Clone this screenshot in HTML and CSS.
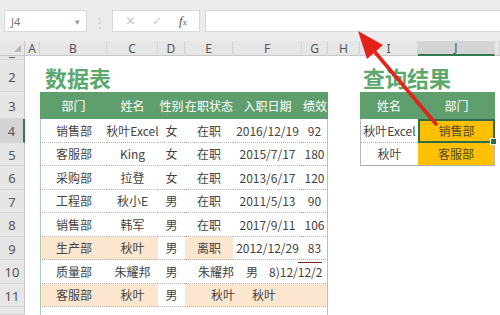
FILE: index.html
```html
<!DOCTYPE html>
<html lang="zh">
<head>
  <meta charset="UTF-8" />
  <title>数据表 - 查询结果</title>
  <link rel="stylesheet" href="styles.css">
</head>
<body>
  <div class="toolbar">
    <div class="namebox"><span>J4</span><span class="drop">▾</span></div>
    <div class="grip">⋮</div>
    <div class="fbtns">
      <span class="fb">✕</span>
      <span class="fb">✓</span>
      <span class="fx"><i>f</i><small>x</small></span>
    </div>
    <div class="finput"></div>
  </div>

  <div class="sheet">
    <!-- column headers -->
    <div class="corner"><span class="tri"></span></div>
    <div class="ch">A</div>
    <div class="ch">B</div>
    <div class="ch">C</div>
    <div class="ch">D</div>
    <div class="ch">E</div>
    <div class="ch">F</div>
    <div class="ch">G</div>
    <div class="ch">H</div>
    <div class="ch">I</div>
    <div class="ch sel">J</div>
    <div class="ch"></div>

    <!-- row 1 -->
    <div class="rh r1"><span class="dash"></span></div>
    <div class="span-rest"></div>

    <!-- row 2 -->
    <div class="rh">2</div>
    <div></div>
    <div class="title span3">数据表</div>
    <div class="span4"></div>
    <div class="title title-r span2">查询结果</div>
    <div></div>

    <!-- row 3 -->
    <div class="rh">3</div>
    <div></div>
    <div class="th">部门</div>
    <div class="th">姓名</div>
    <div class="th">性别</div>
    <div class="th">在职状态</div>
    <div class="th">入职日期</div>
    <div class="th">绩效</div>
    <div></div>
    <div class="th">姓名</div>
    <div class="th">部门</div>
    <div></div>

    <!-- row 4 -->
    <div class="rh sel">4</div>
    <div></div>
    <div class="td first">销售部</div>
    <div class="td">秋叶Excel</div>
    <div class="td">女</div>
    <div class="td">在职</div>
    <div class="td">2016/12/19</div>
    <div class="td last">92</div>
    <div></div>
    <div class="td rfirst">秋叶Excel</div>
    <div class="td yellow active">销售部</div>
    <div></div>

    <!-- row 5 -->
    <div class="rh">5</div>
    <div></div>
    <div class="td first">客服部</div>
    <div class="td">King</div>
    <div class="td">女</div>
    <div class="td">在职</div>
    <div class="td">2015/7/17</div>
    <div class="td last">180</div>
    <div></div>
    <div class="td rfirst rbottom">秋叶</div>
    <div class="td yellow rbottom">客服部</div>
    <div></div>

    <!-- row 6 -->
    <div class="rh">6</div>
    <div></div>
    <div class="td first">采购部</div>
    <div class="td">拉登</div>
    <div class="td">女</div>
    <div class="td">在职</div>
    <div class="td">2013/6/17</div>
    <div class="td last">120</div>
    <div class="span4"></div>

    <!-- row 7 -->
    <div class="rh">7</div>
    <div></div>
    <div class="td first">工程部</div>
    <div class="td">秋小E</div>
    <div class="td">男</div>
    <div class="td">在职</div>
    <div class="td">2011/5/13</div>
    <div class="td last">90</div>
    <div class="span4"></div>

    <!-- row 8 -->
    <div class="rh">8</div>
    <div></div>
    <div class="td first">销售部</div>
    <div class="td">韩军</div>
    <div class="td">男</div>
    <div class="td">在职</div>
    <div class="td">2017/9/11</div>
    <div class="td last">106</div>
    <div class="span4"></div>

    <!-- row 9 -->
    <div class="rh">9</div>
    <div></div>
    <div class="td first hl">生产部</div>
    <div class="td hl">秋叶</div>
    <div class="td">男</div>
    <div class="td hl">离职</div>
    <div class="td">2012/12/29</div>
    <div class="td last">83</div>
    <div class="span4"></div>

    <!-- row 10 -->
    <div class="rh">10</div>
    <div></div>
    <div class="td first">质量部</div>
    <div class="td">朱耀邦</div>
    <div class="td">男</div>
    <div class="td shift">朱耀邦</div>
    <div class="td last span2 glitch"><span>男</span><span>8)12/<span class="over">12/2</span></span></div>
    <div class="span4"></div>

    <!-- row 11 -->
    <div class="rh">11</div>
    <div></div>
    <div class="td first hl">客服部</div>
    <div class="td hl">秋叶</div>
    <div class="td">男</div>
    <div class="td last hl span3 glitch2"><span>秋叶</span><span>秋叶</span></div>
    <div class="span4"></div>

    <!-- row 12 -->
    <div class="rh"></div>
    <div></div>
    <div class="te first"></div>
    <div class="te"></div>
    <div class="te"></div>
    <div class="te"></div>
    <div class="te"></div>
    <div class="te last"></div>
    <div class="span4"></div>
  </div>

  <svg class="arrow" width="500" height="315" viewBox="0 0 500 315">
    <line x1="436" y1="124" x2="374" y2="51" stroke="#e3221b" stroke-width="3.5" stroke-linecap="round" />
    <polygon points="358,31 383,45 367,59" fill="#e3221b" />
  </svg>
</body>
</html>
```

FILE: styles.css
```css
* {
  box-sizing: border-box;
}

body {
  margin: 0;
  width: 500px;
  height: 315px;
  overflow: hidden;
  position: relative;
  background-color: #ffffff;
  color: #444;
  font-family: "Noto Sans CJK SC", "Noto Sans", sans-serif;
  font-size: 12px;
}

/* Formelleiste */
.toolbar {
  display: flex;
  align-items: flex-start;
  height: 41px;
  padding: 10px 0 0 4px;
  background-color: #ececec;
}

.namebox {
  width: 83px;
  height: 22px;
  display: flex;
  align-items: center;
  justify-content: space-between;
  padding: 0 6px;
  background-color: #fff;
  border: 1px solid #d8d8d8;
  font-family: "Noto Sans", sans-serif;
  font-size: 11px;
  color: #777;
}

.namebox .drop {
  font-size: 9px;
  color: #999;
}

.grip {
  width: 25px;
  height: 22px;
  display: flex;
  align-items: center;
  justify-content: center;
  color: #c4c4c4;
  font-size: 13px;
}

.fbtns {
  width: 88px;
  height: 22px;
  display: flex;
  align-items: center;
  justify-content: space-around;
  background-color: #fff;
  border: 1px solid #d8d8d8;
  padding: 0 4px;
}

.fb {
  color: #c8c8c8;
  font-family: "DejaVu Sans", sans-serif;
  font-size: 12px;
}

.fx {
  color: #555;
  font-family: "Liberation Serif", serif;
  font-size: 13px;
}

.fx small {
  font-size: 8px;
}

.finput {
  flex: 1;
  height: 22px;
  margin-left: 5px;
  background-color: #fff;
  border: 1px solid #d8d8d8;
  border-right: none;
}

/* Tabellenblatt */
.sheet {
  display: grid;
  grid-template-columns: 25px 15px 67px 51px 27px 48px 69px 26px 32px 58px 77px 1fr;
  grid-template-rows: 15px 4px 32px 27px repeat(8, 23.5px) 1fr;
  height: 274px;
}

.corner {
  display: flex;
  align-items: flex-end;
  justify-content: flex-end;
  padding: 0 3px 3px 0;
  background-color: #e6e6e6;
  border-right: 1px solid #c8c8c8;
  border-bottom: 1px solid #c8c8c8;
}

.tri {
  width: 0;
  height: 0;
  border-left: 7px solid transparent;
  border-bottom: 7px solid #b4b4b4;
}

.ch {
  display: flex;
  align-items: center;
  justify-content: center;
  background-color: #e6e6e6;
  border-bottom: 1px solid #c8c8c8;
  border-right: 1px solid #d2d2d2;
  font-family: "Noto Sans", sans-serif;
  font-size: 12px;
  color: #555;
}

.ch.sel {
  background-color: #d4d4d4;
  border-bottom: 2px solid #2f7a4c;
}

.rh {
  display: flex;
  align-items: center;
  justify-content: center;
  background-color: #e6e6e6;
  border-right: 1px solid #c8c8c8;
  border-bottom: 1px solid #d4d4d4;
  font-family: "Noto Sans", sans-serif;
  font-size: 13px;
  color: #555;
  padding-top: 2px;
}

.rh.sel {
  background-color: #d4d4d4;
  border-right: 2px solid #2f7a4c;
}

.rh.r1 {
  padding: 0;
  overflow: hidden;
}

.dash {
  width: 6px;
  height: 1px;
  background-color: #666;
}

.span-rest {
  grid-column: 2 / -1;
}

.span2 {
  grid-column: span 2;
}

.span3 {
  grid-column: span 3;
}

.span4 {
  grid-column: span 4;
}

.title {
  display: flex;
  align-items: center;
  padding: 2px 0 0 5px;
  color: #5ca86e;
  font-size: 22px;
  font-weight: 700;
}

.title-r {
  padding-left: 3px;
}

.th {
  display: flex;
  align-items: center;
  justify-content: center;
  background-color: #5f9f6e;
  color: #fff;
}

.td {
  display: flex;
  align-items: center;
  justify-content: center;
  white-space: nowrap;
  border-bottom: 1px dotted #b4b4b4;
}

.te {
  border-top: none;
}

.first,
.te.first {
  border-left: 1px solid #a9ccb3;
}

.last,
.te.last {
  border-right: 1px solid #a9ccb3;
}

.hl {
  background-color: #fce6d0;
}

.shift {
  padding-left: 14px;
}

.glitch {
  justify-content: flex-start;
  gap: 11px;
  padding-left: 13px;
}

.over {
  border-top: 1px solid #7a1f1f;
  line-height: 12px;
}

.glitch2 {
  justify-content: flex-start;
  gap: 17px;
  padding-left: 26px;
}

/* Abfrage-Ergebnis */
.rfirst {
  border-left: 1px solid #b8b8b8;
}

.yellow {
  background-color: #ffc000;
  color: #4f4a30;
  border-right: 1px solid #b8b8b8;
  border-bottom: 1px solid #b8b8b8;
}

.rbottom {
  border-bottom: 1px solid #aaaaaa;
}

.active {
  position: relative;
  border: 2px solid #2f6d47;
}

.active::after {
  content: '';
  position: absolute;
  right: -4px;
  bottom: -4px;
  width: 5px;
  height: 5px;
  background-color: #2f6d47;
  border: 1px solid #fff;
}

.arrow {
  position: absolute;
  top: 0;
  left: 0;
  pointer-events: none;
}
```
